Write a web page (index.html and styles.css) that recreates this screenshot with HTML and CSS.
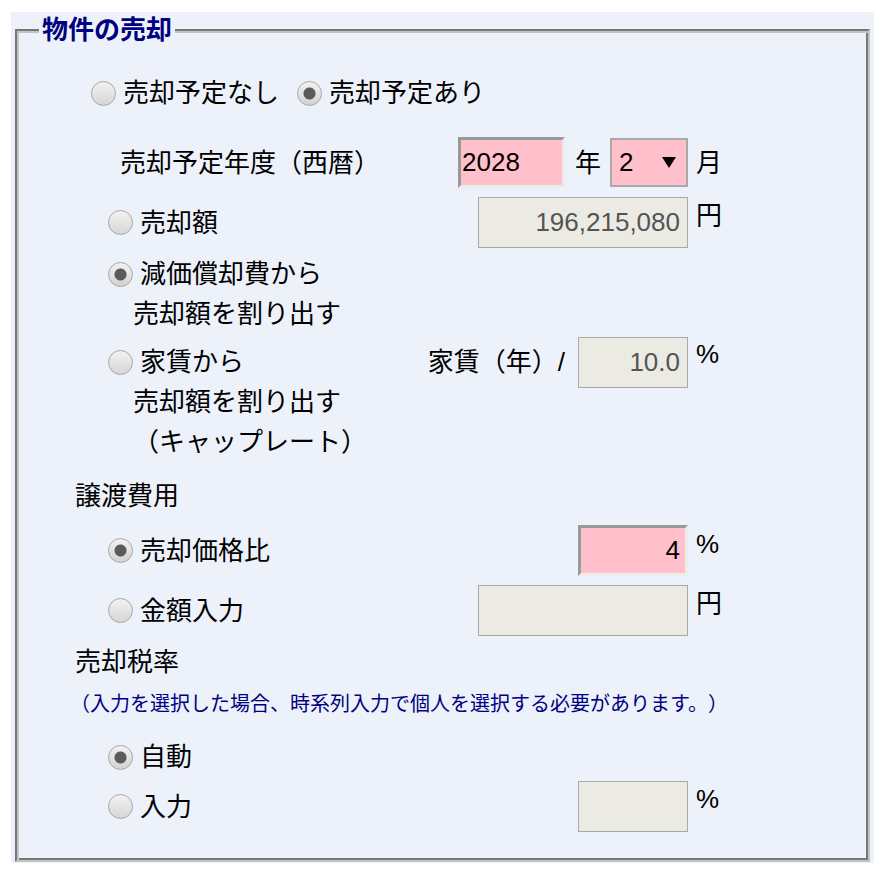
FILE: index.html
```html
<!DOCTYPE html>
<html lang="ja">
<head>
<meta charset="utf-8">
<title>物件の売却</title>
<link rel="stylesheet" href="styles.css">
</head>
<body>
<div class="panel">
  <fieldset class="box">
    <legend class="title">物件の売却</legend>
    <div class="content">
      <div class="row r1">
        <label class="opt"><input type="radio" class="radio" name="plan">売却予定なし</label>
        <label class="opt"><input type="radio" class="radio" name="plan" checked>売却予定あり</label>
      </div>

      <div class="row r2">
        <span class="lbl">売却予定年度（西暦）</span>
        <input class="field pink inset year" value="2028">
        <span class="nen">年</span>
        <div class="sel"><span>2</span><span class="arrow"></span></div>
        <span class="unit mid">月</span>
      </div>

      <div class="row r3 sub">
        <label class="lbl opt"><input type="radio" class="radio" name="m">売却額</label>
        <input class="field dis w210" value="196,215,080" disabled>
        <span class="unit">円</span>
      </div>

      <div class="r4 sub">
        <label class="opt"><input type="radio" class="radio" name="m" checked>減価償却費から</label>
        <div class="cont">売却額を割り出す</div>
      </div>

      <div class="row r5 sub">
        <div class="lbl stack">
          <label class="opt"><input type="radio" class="radio" name="m">家賃から</label>
          <div class="cont">売却額を割り出す</div>
          <div class="cont">（キャップレート）</div>
        </div>
        <span class="rent">家賃（年）/</span>
        <input class="field dis w110" value="10.0" disabled>
        <span class="unit">%</span>
      </div>

      <div class="head h1">譲渡費用</div>

      <div class="row r6 sub">
        <label class="lbl opt"><input type="radio" class="radio" name="c" checked>売却価格比</label>
        <input class="field pink inset w110 right" value="4">
        <span class="unit">%</span>
      </div>

      <div class="row r7 sub">
        <label class="lbl opt"><input type="radio" class="radio" name="c">金額入力</label>
        <input class="field dis w210" value="" disabled>
        <span class="unit">円</span>
      </div>

      <div class="head h2">売却税率</div>
      <div class="note">（入力を選択した場合、時系列入力で個人を選択する必要があります。）</div>

      <div class="r8 sub">
        <label class="opt"><input type="radio" class="radio" name="t" checked>自動</label>
      </div>

      <div class="row r9 sub">
        <label class="lbl opt"><input type="radio" class="radio" name="t">入力</label>
        <input class="field dis w110" value="" disabled>
        <span class="unit">%</span>
      </div>
    </div>
  </fieldset>
</div>
</body>
</html>
```

FILE: styles.css
```css
* { box-sizing: border-box; }

body {
  margin: 0;
  background: #ffffff;
  font-family: "Liberation Sans", "Noto Sans CJK JP", sans-serif;
  font-size: 26px;
  color: #000;
}

.panel {
  margin: 12px 0 0 11px;
  width: 863px;
  height: 851px;
  padding: 3px 4px 1px 4px;
  background: #edf1fa;
}

.box {
  margin: 0;
  padding: 0;
  min-width: 0;
  height: 100%;
  border: 2px solid;
  border-color: #777 #c4c4c4 #c4c4c4 #777;
  box-shadow: inset 2px 2px 0 #c4c4c4, inset -2px -2px 0 #777;
}

.title {
  margin-left: 22px;
  padding: 0 3px;
  font-size: 26px;
  line-height: 30px;
  font-weight: bold;
  color: #000080;
  background: #edf1fa;
}

.content {
  padding: 28px 0 0 58px;
}

.row {
  display: flex;
  align-items: center;
  width: 652px;
}

.sub { padding-left: 33px; }

.opt {
  display: flex;
  align-items: center;
  height: 40px;
  line-height: 40px;
  white-space: nowrap;
}

.radio {
  -webkit-appearance: none;
  appearance: none;
  width: 25px;
  height: 25px;
  margin: 0 7px 0 0;
  border-radius: 50%;
  border: 1px solid #a8a8a8;
  background: linear-gradient(#f2f2f2, #d6d6d6);
  flex: none;
}

.radio:checked {
  background: radial-gradient(circle at center, #5a5a5a 0 5.5px, rgba(0,0,0,0) 6.5px), linear-gradient(#f2f2f2, #d2d2d2);
}

.r1 { height: 40px; padding-left: 16px; }
.r1 .opt + .opt { margin-left: 18px; }

.r2 { margin-top: 24px; height: 51px; padding-left: 45px; }

.lbl {
  flex: 1;
  line-height: 40px;
  white-space: nowrap;
}

.field {
  height: 51px;
  margin: 0;
  font-family: "Liberation Sans", "Noto Sans CJK JP", sans-serif;
  font-size: 26px;
  color: #000;
  outline: none;
}

.pink { background: #ffc0cb; }

.inset {
  border: 3px solid;
  border-color: #999 #ececec #ececec #999;
  padding: 0 5px 0 1px;
}

.year { width: 107px; text-align: left; }
.right { text-align: right; }

.nen {
  width: 26px;
  margin: 0 9px 0 10px;
  line-height: 40px;
}

.sel {
  width: 78px;
  height: 49px;
  border: 2px solid #a9a9a9;
  background: #ffc0cb;
  display: flex;
  align-items: center;
  justify-content: space-between;
  padding: 0 10px 0 7px;
}

.arrow {
  width: 0;
  height: 0;
  border-left: 7px solid transparent;
  border-right: 7px solid transparent;
  border-top: 11px solid #000;
}

.unit {
  width: 31px;
  margin-left: 8px;
  margin-top: -1px;
  line-height: 40px;
  align-self: flex-start;
}

.unit.mid { align-self: center; margin-top: 0; }

.dis {
  background: #ebebe4;
  border: 1px solid #a9a9a9;
  color: #545454;
  text-align: right;
  padding: 0 7px 0 0;
}

.w210 { width: 210px; }
.w110 { width: 110px; }

.r3 { margin-top: 9px; height: 51px; }

.r4 { margin-top: 6px; }

.cont {
  height: 40px;
  line-height: 40px;
  padding-left: 25px;
  white-space: nowrap;
}

.r5 { margin-top: 3px; align-items: flex-start; }
.r5 .unit { margin-top: -3px; }
.stack { padding-top: 5px; }

.rent {
  height: 51px;
  line-height: 51px;
  margin-right: 13px;
  white-space: nowrap;
}

.head {
  height: 40px;
  line-height: 40px;
}

.h1 { margin-top: 14px; }

.r6 { margin-top: 9px; height: 51px; }
.r7 { margin-top: 9px; height: 51px; }

.h2 { margin-top: 6px; }

.note {
  margin-top: 7px;
  margin-left: -5px;
  height: 30px;
  line-height: 30px;
  font-size: 20px;
  color: #000080;
  white-space: nowrap;
  text-spacing-trim: space-all;
}

.r8 { margin-top: 18px; }

.r9 { margin-top: 4px; height: 51px; }
.r9 .unit { margin-top: -2px; }
```
